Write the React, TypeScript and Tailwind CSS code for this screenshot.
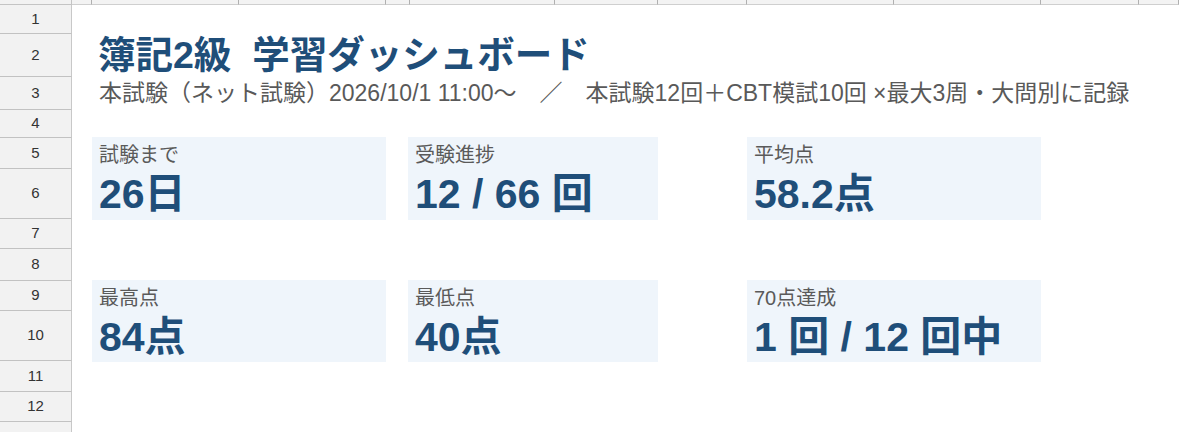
import React from "react";

const rowNums = [1, 2, 3, 4, 5, 6, 7, 8, 9, 10, 11, 12];

interface StatCardProps {
    label: string;
    value: string;
    className: string;
}

const StatCard = ({ label, value, className }: StatCardProps) => {
    return (
        <div className={`bg-[#eff5fb] flex flex-col px-[7px] -my-px ${className}`}>
            <div className="h-[32px] flex items-end pb-[4px] text-[20px] leading-none text-[#5a5a5a]">{label}</div>
            <div className="h-[50px] flex items-center text-[41px] leading-none font-bold text-[#1f4e79]">{value}</div>
        </div>
    );
};

export default function App() {
    return (
        <div className="w-[1179px] h-[432px] overflow-hidden bg-white font-['Liberation_Sans','Noto_Sans_CJK_JP',sans-serif]">
            <div className="grid grid-cols-[72px_20px_147px_147px_24px_145px_103px_89px_147px_147px_98px_1fr] grid-rows-[5px_29px_43px_33px_28px_31px_50px_30px_32px_30px_50px_31px_30px_1fr] h-full">
                {/* corner + column header strip */}
                <div className="col-start-1 row-start-1 bg-[#f2f2f2] border-r border-b border-[#c4c4c4]" />
                {Array.from({ length: 11 }).map((_, i) => (
                    <div
                        key={`h${i}`}
                        className="row-start-1 bg-[#f3f3f3] border-r border-b border-r-[#b0b0b0] border-b-[#cfcfcf]"
                    />
                ))}

                {/* row headers */}
                {rowNums.map((n) => (
                    <div
                        key={n}
                        className="col-start-1 bg-[#f2f2f2] border-r border-b border-r-[#c8c8c8] border-b-[#c2c2c2] flex items-center justify-center text-[15px] text-[#333]"
                    >
                        {n}
                    </div>
                ))}
                <div className="col-start-1 bg-[#f2f2f2] border-r border-[#c8c8c8]" />

                {/* title */}
                <div className="col-start-3 col-span-10 row-start-3 flex items-center whitespace-pre text-[37.5px] leading-none font-bold text-[#1f4e79] pl-[6px]">
                    簿記2級  学習ダッシュボード
                </div>
                <div className="col-start-3 col-span-10 row-start-4 flex items-center whitespace-pre text-[23px] leading-none text-[#595959] pl-[7px]">
                    本試験（ネット試験）2026/10/1 11:00〜　／　本試験12回＋CBT模試10回 ×最大3周・大問別に記録
                </div>

                <StatCard label="試験まで" value="26日" className="col-start-3 col-span-2 row-start-6 row-span-2" />
                <StatCard label="受験進捗" value="12 / 66 回" className="col-start-6 col-span-2 row-start-6 row-span-2 -ml-[2px]" />
                <StatCard label="平均点" value="58.2点" className="col-start-9 col-span-2 row-start-6 row-span-2" />

                <StatCard label="最高点" value="84点" className="col-start-3 col-span-2 row-start-10 row-span-2" />
                <StatCard label="最低点" value="40点" className="col-start-6 col-span-2 row-start-10 row-span-2 -ml-[2px]" />
                <StatCard label="70点達成" value="1 回 / 12 回中" className="col-start-9 col-span-2 row-start-10 row-span-2" />
            </div>
        </div>
    );
}
